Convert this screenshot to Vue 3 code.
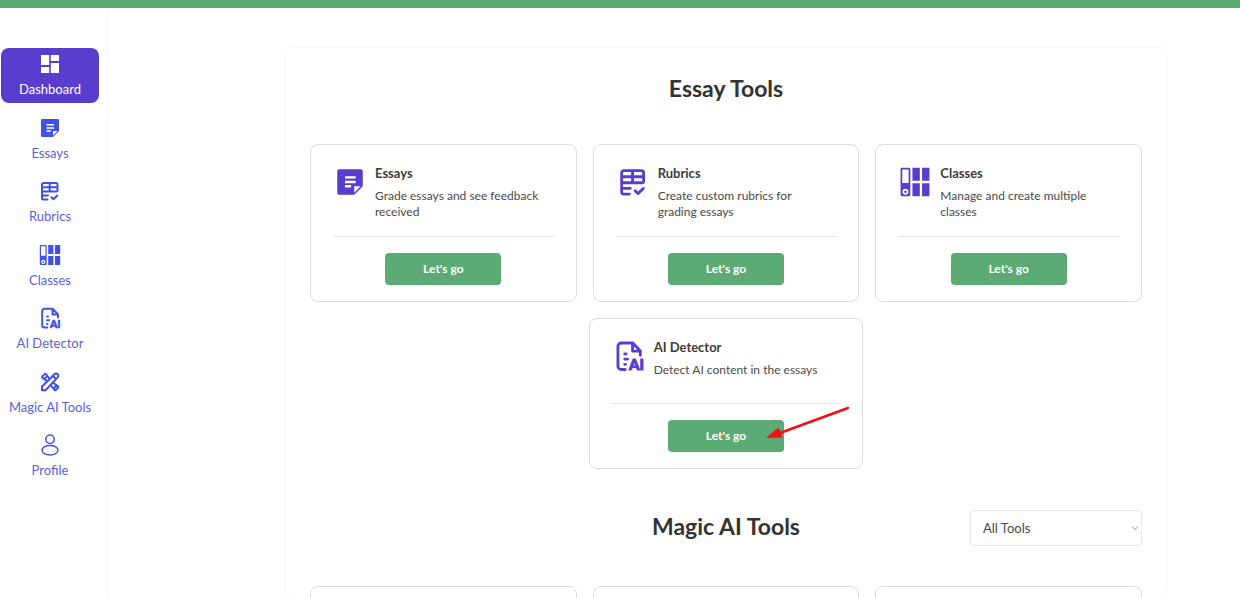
<script setup>
import { ref } from 'vue'

const nav = [
  { icon: 'dashboard', label: 'Dashboard' },
  { icon: 'essays', label: 'Essays' },
  { icon: 'rubrics', label: 'Rubrics' },
  { icon: 'classes', label: 'Classes' },
  { icon: 'detector', label: 'AI Detector' },
  { icon: 'magic', label: 'Magic AI Tools' },
  { icon: 'profile', label: 'Profile' },
]

const tools = [
  { icon: 'essays', title: 'Essays', text: 'Grade essays and see feedback received' },
  { icon: 'rubrics', title: 'Rubrics', text: 'Create custom rubrics for grading essays' },
  { icon: 'classes', title: 'Classes', text: 'Manage and create multiple classes' },
  { icon: 'detector', title: 'AI Detector', text: 'Detect AI content in the essays' },
]

const active = ref('dashboard')
const filter = ref('all')
</script>

<template>
  <div class="page">
    <svg class="symbols" aria-hidden="true">
      <symbol id="i-dashboard" viewBox="0 0 24 24">
        <path fill="currentColor" d="M3 3h8.2v10H3zM3 15h8.2v6H3zM12.8 3H21v6h-8.200zM12.8 11H21v10h-8.200z" />
      </symbol>
      <symbol id="i-essays" viewBox="0 0 24 24">
        <path fill="currentColor" fill-rule="evenodd" d="M4.300 3h15.400A1.300 1.300 0 0 1 21 4.300V15l-6 6H4.300A1.300 1.300 0 0 1 3 19.700V4.300A1.300 1.300 0 0 1 4.300 3zM8.500 8v1.600h7.500V8zM8.500 11.200v1.600h7.500v-1.600zM8.500 14.200v1.600h4.300v-1.600zM15 15v4.500l4.500-4.500z" />
      </symbol>
      <symbol id="i-rubrics" viewBox="0 0 24 24">
        <path fill="none" stroke="currentColor" stroke-width="2" stroke-linecap="round" stroke-linejoin="round" d="M9.500 20.500H5.500A1.500 1.500 0 0 1 4 19v-13.500A1.500 1.500 0 0 1 5.500 4h12.500A1.500 1.500 0 0 1 19.500 5.500v6a1 1 0 0 1-1 1H4M4 8.300H19.500M11.700 4v8.500M4 16.500h6M13.500 18.200l2 2 3.800-3.600" />
      </symbol>
      <symbol id="i-classes" viewBox="0 0 24 24">
        <path fill="currentColor" fill-rule="evenodd" d="M2.800 2h4.900a1 1 0 0 1 1 1v18a1 1 0 0 1-1 1H2.800a1 1 0 0 1-1-1V3a1 1 0 0 1 1-1zM3 3.200v9.500h4.500V3.200zM5.250 16.800a2.100 2.100 0 1 0 0 4.200 2.100 2.100 0 0 0 0-4.200zM5.250 18a.9.9 0 1 1 0 1.800.9.9 0 0 1 0-1.800zM10.200 2h5.200v9.100h-5.200zM17 2h5.200v9.100H17zM10.200 12.900h5.200V22h-5.200zM17 12.900h5.200V22H17z" />
      </symbol>
      <symbol id="i-detector" viewBox="0 0 24 24">
        <path fill="none" stroke="currentColor" stroke-width="2" stroke-linecap="round" stroke-linejoin="round" d="M9.300 21.500H6.500A2.300 2.300 0 0 1 4.200 19.200V5A2.200 2.200 0 0 1 6.400 2.800h8.300L20 8.500v3M14.500 3.300v5.200h5.200M9 10.500h1M9 14.200h2M9 17.900h.6" />
        <text x="12" y="22.200" fill="currentColor" stroke="currentColor" stroke-width="0.700" stroke-linejoin="round" font-family="Lato, sans-serif" font-weight="900" font-size="10.500">AI</text>
      </symbol>
      <symbol id="i-magic" viewBox="0 0 24 24">
        <g fill="none" stroke="currentColor" stroke-width="2" stroke-linecap="round" stroke-linejoin="round">
          <path d="M4 20.200v-3.700L16.500 4.200a2.200 2.200 0 0 1 3.200 3.200L7.500 20.200zM15 6l3 3" />
          <path d="M9 11 4.300 7.800a1 1 0 0 1 0-1.300L6.700 4.100a1 1 0 0 1 1.400 0L11.200 8.500M6 9l2-1.700" />
          <path d="M13 15.500 16.500 20a1 1 0 0 0 1.300 0l2.200-2.300a1 1 0 0 0 0-1.300L15.500 13M15.800 18.200l1.700-1.700" />
        </g>
      </symbol>
      <symbol id="i-profile" viewBox="0 0 24 24">
        <g fill="none" stroke="currentColor" stroke-width="1.500">
          <circle cx="12" cy="6.300" r="4.200" />
          <ellipse cx="12" cy="17.300" rx="8" ry="4.700" />
        </g>
      </symbol>
    </svg>

    <header class="topbar"></header>

    <div class="body">
      <aside class="sidebar">
        <nav class="nav">
          <a
            v-for="item in nav"
            :key="item.icon"
            href="#"
            class="nav-item"
            :class="{ active: active === item.icon }"
            @click.prevent="active = item.icon"
          >
            <svg class="nav-icon" aria-hidden="true"><use :href="'#i-' + item.icon" /></svg>
            <span>{{ item.label }}</span>
          </a>
        </nav>
      </aside>

      <main class="main">
        <div class="panel">
          <h2 class="heading">Essay Tools</h2>
          <div class="cards">
            <article v-for="tool in tools" :key="tool.icon" class="card" :class="{ single: tool.icon === 'detector' }">
              <div class="card-head">
                <svg class="card-icon" aria-hidden="true"><use :href="'#i-' + tool.icon" /></svg>
                <div>
                  <h3>{{ tool.title }}</h3>
                  <p>{{ tool.text }}</p>
                </div>
              </div>
              <hr />
              <button type="button">Let's go</button>
              <svg v-if="tool.icon === 'detector'" class="arrow" viewBox="0 0 88 36" aria-hidden="true">
                <path d="M83 3 15 28" stroke="#f40d12" stroke-width="2.500" stroke-linecap="round" />
                <path d="M1 33 13.500 22.500 17.500 32.500z" fill="#f40d12" />
              </svg>
            </article>
          </div>

          <div class="magic-row">
            <h2 class="heading">Magic AI Tools</h2>
            <div class="select">
              <select v-model="filter" aria-label="Filter tools">
                <option value="all">All Tools</option>
              </select>
              <svg viewBox="0 0 8 8" aria-hidden="true">
                <path d="M1 2.500 4 5.500 7 2.500" fill="none" stroke="#8c8c8c" />
              </svg>
            </div>
          </div>
          <div class="cards">
            <article v-for="n in 3" :key="n" class="card blank"></article>
          </div>
        </div>
      </main>
    </div>
  </div>
</template>

<style>
body {
  margin: 0;
  background: #fff;
}
</style>

<style scoped>
.page {
  display: flex;
  flex-direction: column;
  height: 100vh;
  overflow: hidden;
  font-family: Lato, 'Liberation Sans', sans-serif;
  font-size: 13px;
  line-height: 16px;
  color: #4a4a4a;
}
.symbols {
  display: none;
}
.topbar {
  flex: none;
  height: 8px;
  background: #5dab74;
}
.body {
  flex: 1;
  display: flex;
  min-height: 0;
}
.sidebar {
  flex: none;
  box-sizing: border-box;
  width: 106px;
  padding: 40px 7px 0 1px;
  box-shadow: 1px 0 4px rgba(0, 0, 0, 0.05);
}
.nav {
  display: flex;
  flex-direction: column;
  justify-content: space-between;
  min-height: 436px;
}
.nav-item {
  display: flex;
  flex-direction: column;
  align-items: center;
  gap: 5px;
  padding: 4px 0 6px;
  border-radius: 8px;
  color: #5960e6;
  text-decoration: none;
  white-space: nowrap;
}
.nav-icon {
  width: 24px;
  height: 24px;
  color: #4052e6;
}
.nav-item.active,
.nav-item.active .nav-icon {
  color: #fff;
}
.nav-item.active {
  background: #593dce;
}
.main {
  flex: 1;
  display: flex;
  justify-content: center;
  padding: 40px 0 0 106px;
}
.panel {
  box-sizing: border-box;
  width: 100%;
  max-width: 880px;
  padding: 24px;
  border-radius: 8px;
  box-shadow: 0 0 6px rgba(0, 0, 0, 0.05);
}
.heading {
  margin: 0;
  font-size: 23px;
  line-height: 32px;
  font-weight: 700;
  text-align: center;
  color: #333;
}
.cards {
  display: grid;
  grid-template-columns: repeat(3, 1fr);
  gap: 16px;
  margin-top: 40px;
}
.card {
  position: relative;
  display: flex;
  flex-direction: column;
  padding: 20px 22px 16px;
  border: 1px solid #dcdcdf;
  border-radius: 8px;
}
.card.single {
  grid-column: 2;
  margin: 0 -4px;
}
.card.blank {
  min-height: 120px;
}
.card-head {
  display: flex;
  gap: 8px;
  min-height: 48px;
  padding-right: 8px;
}
.card-icon {
  flex: none;
  width: 34px;
  height: 34px;
  color: #593dce;
}
h3 {
  margin: 0 0 7px;
  font-size: 13px;
  line-height: 16px;
  font-weight: 700;
  color: #3c3c3c;
}
p {
  margin: 0;
  font-size: 12px;
}
hr {
  width: 100%;
  height: 1px;
  margin: 16px 0;
  border: 0;
  background: #e4e4e6;
}
button {
  align-self: center;
  width: 116px;
  height: 32px;
  padding: 0;
  border: 0;
  border-radius: 4px;
  background: #5dab74;
  color: #fff;
  font: 700 12px/16px Lato, sans-serif;
  cursor: pointer;
}
.arrow {
  position: absolute;
  left: 175px;
  top: 86px;
  width: 88px;
  height: 36px;
}
.magic-row {
  display: grid;
  grid-template-columns: 1fr auto 1fr;
  align-items: start;
  margin-top: 41px;
}
.magic-row .heading {
  grid-column: 2;
}
.select {
  position: relative;
  justify-self: end;
  width: 172px;
}
.select select {
  appearance: none;
  display: block;
  box-sizing: border-box;
  width: 100%;
  height: 36px;
  padding: 0 24px 0 12px;
  border: 1px solid #e8e8ea;
  border-radius: 4px;
  background: #fff;
  color: #4a4a4a;
  font: 13px/16px Lato, sans-serif;
}
.select svg {
  position: absolute;
  right: 3px;
  top: 14px;
  width: 8px;
  height: 8px;
  pointer-events: none;
}
</style>
